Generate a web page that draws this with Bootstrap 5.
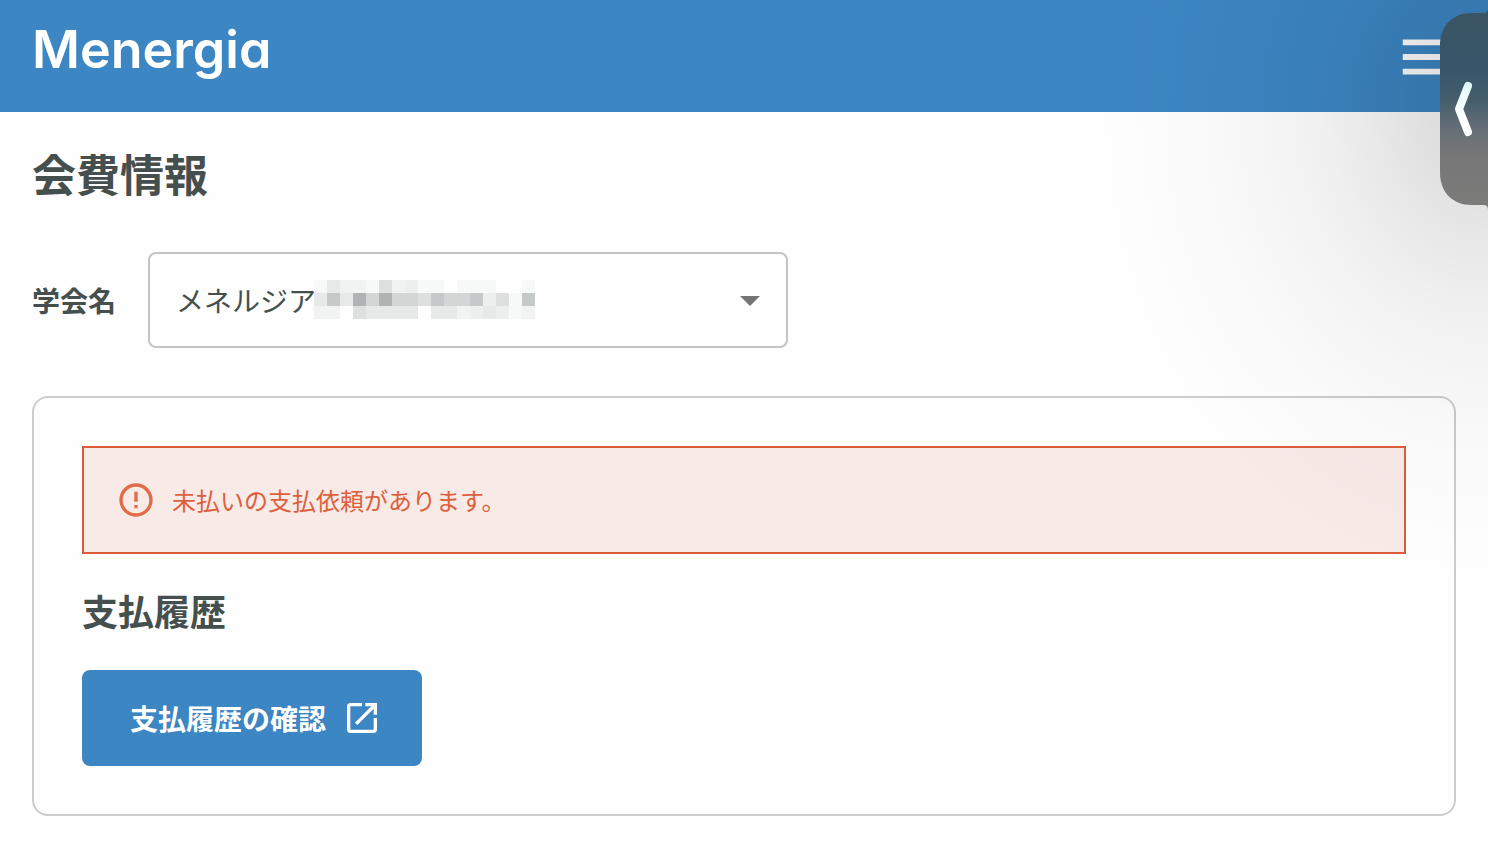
<!DOCTYPE html>
<html lang="ja">
<head>
<meta charset="utf-8">
<meta name="viewport" content="width=device-width, initial-scale=1">
<title>会費情報 | Menergia</title>
<link href="https://cdn.jsdelivr.net/npm/bootstrap@5.3.0/dist/css/bootstrap.min.css" rel="stylesheet">
<style>
  body { font-family: "Noto Sans CJK JP", "Noto Sans", sans-serif; color: #454f4d; background: #fefefe; overflow-x: hidden; }
  .site-header { background: #3c86c3; height: 112px; padding: 0 24px 0 32px; }
  .brand { font-family: Inter, sans-serif; font-feature-settings: "cv11"; font-weight: 600; font-size: 52px; line-height: 64px; margin-bottom: 12px; color: #fff; text-decoration: none; }
  .menu-btn, .tab-btn { background: none; border: 0; padding: 0; color: #fff; line-height: 0; }
  .menu-btn { padding-top: 2px; }
  .page-main { padding: 28px 32px 48px; }
  .page-title { font-size: 44px; line-height: 66px; font-weight: 700; margin-bottom: 46px; }
  .society-row { gap: 32px; margin-bottom: 48px; }
  .society-label { font-size: 28px; font-weight: 700; }
  .society-field { flex: 0 1 640px; }
  .society-select { height: 96px; padding: 0 64px 0 26px; font-size: 28px; color: #454f4d; background: #fefefe; border: 2px solid #c4c4c4; border-radius: 8px; }
  .society-arrow { right: 28px; top: 44px; pointer-events: none; }
  .society-mask { left: 166px; top: 28px; pointer-events: none; }
  .panel { border: 2px solid #ccc; border-radius: 16px; padding: 48px; }
  .unpaid { border: 2px solid #dc5c38; border-radius: 0; background: #f8eae7; color: #dd5f3c; padding: 32px; gap: 16px; font-size: 24px; line-height: 40px; margin-bottom: 32px; }
  .section-title { font-size: 36px; line-height: 48px; font-weight: 700; margin-bottom: 36px; }
  .history-btn { --bs-btn-bg: #3c86c3; --bs-btn-border-color: #3c86c3; --bs-btn-color: #fff; height: 96px; padding: 0 38px 0 46px; gap: 16px; border-width: 2px; border-radius: 8px; font-size: 28px; font-weight: 700; }
  .edge-shade { inset: 0; z-index: 5; pointer-events: none;
    background: radial-gradient(ellipse 400px 480px at 100% 110px, rgba(0,0,0,.15), rgba(0,0,0,.12) 15%, rgba(0,0,0,.09) 27%, rgba(0,0,0,.055) 42%, rgba(0,0,0,.023) 64%, rgba(0,0,0,.006) 84%, rgba(0,0,0,0)); }
  .tab-btn { right: 0; top: 8px; z-index: 10; }
</style>
</head>
<body class="position-relative min-vh-100">
<header class="site-header d-flex align-items-center justify-content-between">
  <a class="brand" href="#">Menergia</a>
  <button class="menu-btn" type="button" aria-label="メニュー">
    <svg width="70" height="70" viewBox="0 0 24 24" fill="currentColor" aria-hidden="true"><path d="M3 18h18v-2H3v2zm0-5h18v-2H3v2zm0-7v2h18V6H3z"/></svg>
  </button>
</header>

<main class="page-main">
  <h1 class="page-title">会費情報</h1>

  <div class="society-row d-flex align-items-center">
    <label class="society-label" for="society">学会名</label>
    <div class="society-field position-relative">
      <select class="society-select form-select" id="society"><option>メネルジア</option></select>
      <svg class="society-mask position-absolute" width="221" height="39" viewBox="0 0 17 3" shape-rendering="crispEdges" aria-hidden="true">
        <g fill="#f7f8f8"><path d="M0 0h1v1H0zM4 0h1v1H4zM8 0h2v1H8zM11 0h3v1h-3zM16 0h1v1h-1zM15 1h1v2h-1z"/></g>
        <g fill="#f1f3f2"><path d="M2 0h2v1H2zM6 0h1v1H6zM0 2h2v1H0zM11 2h1v1h-1zM16 2h1v1h-1z"/></g>
        <g fill="#ecefed"><path d="M7 0h1v1H7zM13 1h1v1h-1zM12 2h1v1h-1zM14 2h1v1h-1z"/></g>
        <g fill="#e6e9e8"><path d="M1 0h1v1H1zM0 1h1v1H0zM2 1h1v1H2zM4 2h4v1H4zM9 2h2v1H9zM13 2h1v1h-1z"/></g>
        <g fill="#dde0df"><path d="M5 0h1v1H5zM8 1h1v1H8zM14 1h1v1h-1zM3 2h1v1H3z"/></g>
        <g fill="#d4d6d5"><path d="M4 1h1v1H4zM6 1h2v1H6zM10 1h2v1h-2z"/></g>
        <g fill="#c6c9c9"><path d="M1 1h1v1H1zM9 1h1v1H9zM12 1h1v1h-1zM16 1h1v1h-1z"/></g>
        <g fill="#afb3b4"><path d="M3 1h1v1H3zM5 1h1v1H5z"/></g>
      </svg>
      <svg class="society-arrow position-absolute" width="20" height="10" viewBox="0 0 20 10" fill="#757575" aria-hidden="true"><path d="M0 0h20L10 10z"/></svg>
    </div>
  </div>

  <section class="panel">
    <div class="unpaid alert d-flex align-items-center" role="alert">
      <svg class="flex-shrink-0" width="40" height="40" viewBox="0 0 24 24" fill="#e26c49" aria-hidden="true"><path d="M11 15h2v2h-2zm0-8h2v6h-2zm.99-5C6.47 2 2 6.48 2 12s4.47 10 9.99 10C17.52 22 22 17.52 22 12S17.52 2 11.99 2zM12 20c-4.42 0-8-3.58-8-8s3.58-8 8-8 8 3.58 8 8-3.58 8-8 8z"/></svg>
      <span>未払いの支払依頼があります。</span>
    </div>
    <h2 class="section-title">支払履歴</h2>
    <button class="history-btn btn d-inline-flex align-items-center" type="button">
      <span>支払履歴の確認</span>
      <svg width="40" height="40" viewBox="0 0 24 24" fill="currentColor" aria-hidden="true"><path d="M19 19H5V5h7V3H5c-1.110 0-2 .9-2 2v14c0 1.100.89 2 2 2h14c1.100 0 2-.9 2-2v-7h-2v7zM14 3v2h3.590l-9.830 9.830 1.410 1.410L19 6.410V10h2V3h-7z"/></svg>
    </button>
  </section>
</main>

<div class="edge-shade position-absolute"></div>
<button class="tab-btn position-absolute" type="button" aria-label="パネルを開く">
  <svg width="48" height="202" viewBox="0 0 48 202" aria-hidden="true">
    <defs>
      <linearGradient id="tabFill" x1="0" y1="0" x2="0" y2="1">
        <stop offset="0" stop-color="#3b5362"/><stop offset=".3" stop-color="#37566a"/>
        <stop offset=".46" stop-color="#455e6c"/><stop offset=".6" stop-color="#666f76"/>
        <stop offset=".74" stop-color="#777"/><stop offset="1" stop-color="#7c7b7a"/>
      </linearGradient>
      <linearGradient id="arrowFill" gradientUnits="userSpaceOnUse" x1="0" y1="74" x2="0" y2="112">
        <stop offset="0" stop-color="#e2fdff"/><stop offset="1" stop-color="#fff"/>
      </linearGradient>
    </defs>
    <path d="M48 0q0 5-4 5H32C12 5 0 18 0 38v126c0 20 12 33 32 33h12q4 0 4 5z" fill="url(#tabFill)"/>
    <path d="M28 78L19 101l9 23" fill="none" stroke="url(#arrowFill)" stroke-width="8" stroke-linecap="round" stroke-linejoin="round"/>
  </svg>
</button>
<script src="https://cdn.jsdelivr.net/npm/bootstrap@5.3.0/dist/js/bootstrap.bundle.min.js"></script>
</body>
</html>
